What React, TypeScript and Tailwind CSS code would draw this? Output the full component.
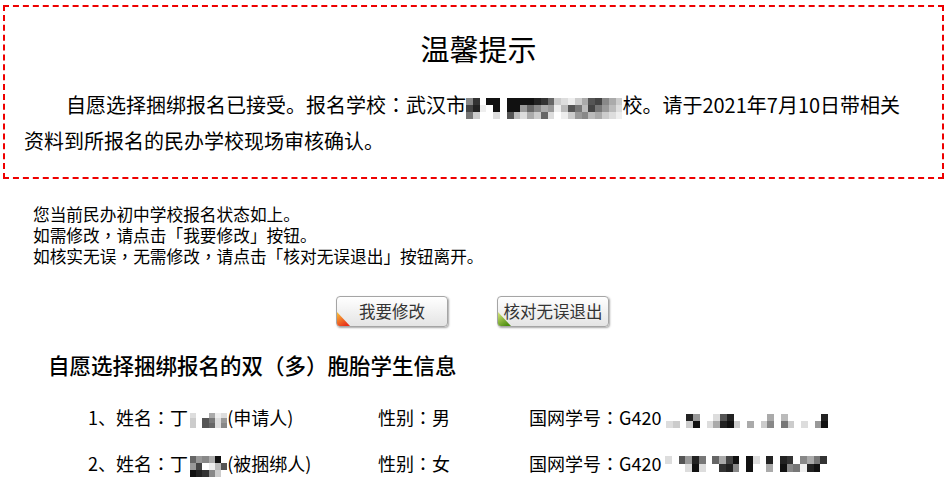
import React from "react";

type Cols = string[][];

function Mosaic({ cols, cw, ch, className = "" }: { cols: Cols; cw: number; ch: number; className?: string }) {
  const rows = cols[0].length;
  return (
    <svg
      width={cols.length * cw}
      height={rows * ch}
      className={"inline-block " + className}
      shapeRendering="crispEdges"
    >
      {cols.map((col, i) =>
        col.map((c, j) => <rect key={i + "-" + j} x={i * cw} y={j * ch} width={cw} height={ch} fill={c} />)
      )}
    </svg>
  );
}

function P({ children }: { children: React.ReactNode }) {
  return <span className="font-['Noto_Sans_CJK_TC','Noto_Sans_CJK_SC',sans-serif]">{children}</span>;
}

const topMosaic: Cols = [
  ["#888", "#444", "#777"],
  ["#333", "#222", "#ccc"],
  ["#fff", "#eee", "#fff"],
  ["#111", "#fff", "#fff"],
  ["#111", "#111", "#ddd"],
  ["#fff", "#fff", "#fff"],
  ["#111", "#111", "#555"],
  ["#111", "#111", "#bbb"],
  ["#111", "#999", "#ddd"],
  ["#111", "#666", "#aaa"],
  ["#222", "#888", "#ccc"],
  ["#333", "#aaa", "#666"],
  ["#666", "#999", "#ddd"],
  ["#ccc", "#eee", "#fff"],
  ["#ddd", "#bbb", "#eee"],
  ["#eee", "#555", "#ccc"],
  ["#ccc", "#777", "#999"],
  ["#aaa", "#bbb", "#888"],
  ["#555", "#444", "#bbb"],
  ["#444", "#777", "#aaa"],
  ["#888", "#999", "#ccc"],
  ["#aaa", "#bbb", "#ddd"],
  ["#ccc", "#ddd", "#eee"],
];

const name1: Cols = [
  ["#ddd", "#ccc", "#ccc"],
  ["#fff", "#fff", "#fff"],
  ["#fff", "#555", "#555"],
  ["#aaa", "#777", "#666"],
  ["#eee", "#ddd", "#ddd"],
  ["#ddd", "#999", "#888"],
];

const name2: Cols = [
  ["#666", "#999", "#111"],
  ["#999", "#444", "#222"],
  ["#888", "#fff", "#333"],
  ["#aaa", "#eee", "#888"],
  ["#111", "#bbb", "#ccc"],
  ["#fff", "#555", "#fff"],
];

const num1: Cols = [
  ["#fff", "#ddd"],
  ["#fff", "#ccc"],
  ["#fff", "#fff"],
  ["#222", "#ccc"],
  ["#999", "#111"],
  ["#fff", "#fff"],
  ["#fff", "#ddd"],
  ["#ddd", "#aaa"],
  ["#555", "#222"],
  ["#222", "#111"],
  ["#fff", "#ccc"],
  ["#fff", "#fff"],
  ["#fff", "#aaa"],
  ["#fff", "#fff"],
  ["#fff", "#ccc"],
  ["#aaa", "#888"],
  ["#fff", "#fff"],
  ["#bbb", "#777"],
  ["#fff", "#ccc"],
  ["#fff", "#fff"],
  ["#fff", "#ddd"],
  ["#fff", "#fff"],
  ["#fff", "#999"],
  ["#222", "#111"],
];

const num2: Cols = [
  ["#ddd", "#fff"],
  ["#fff", "#fff"],
  ["#555", "#fff"],
  ["#999", "#ddd"],
  ["#222", "#111"],
  ["#777", "#ddd"],
  ["#fff", "#fff"],
  ["#666", "#fff"],
  ["#aaa", "#333"],
  ["#444", "#222"],
  ["#111", "#888"],
  ["#fff", "#fff"],
  ["#111", "#111"],
  ["#ddd", "#fff"],
  ["#fff", "#fff"],
  ["#222", "#aaa"],
  ["#fff", "#fff"],
  ["#222", "#111"],
  ["#333", "#888"],
  ["#fff", "#777"],
  ["#888", "#eee"],
  ["#aaa", "#222"],
  ["#777", "#111"],
  ["#333", "#fff"],
];

function Btn({ label, from, to }: { label: string; from: string; to: string }) {
  const id = "g" + label.length + from.replace("#", "");
  return (
    <button className="relative h-[31px] w-[112px] rounded-[4px] border border-[#a5a5a5] bg-gradient-to-b from-white to-[#e4e4e4] text-[16.5px] leading-[29px] text-[#333] shadow-[1px_1px_2px_rgba(0,0,0,0.35)]">
      {label}
      <svg width="13" height="14" className="absolute bottom-0 left-0" viewBox="0 0 13 14">
        <defs>
          <linearGradient id={id} x1="0" y1="0" x2="0.6" y2="1">
            <stop offset="0" stopColor={from} />
            <stop offset="1" stopColor={to} />
          </linearGradient>
        </defs>
        <path d="M0 0 L0 11 Q0 14 3 14 L13 14 Z" fill={`url(#${id})`} />
      </svg>
    </button>
  );
}

export default function App() {
  return (
    <div className="min-h-[487px] w-[948px] bg-white font-['Noto_Sans_CJK_SC','Noto_Sans',sans-serif] text-black [text-spacing-trim:space-all]">
      <div className="px-[3px] pt-[5px]">
        <div className="h-[174px] w-[941px] border-2 border-dashed border-[#ee0000] pl-[19px] pr-[9px] pt-[21px]">
          <h1 className="text-center text-[29px] leading-[40px] font-normal">温馨提示</h1>
          <p className="mt-[19px] indent-[42px] text-[20px] leading-[36px]">
            自愿选择捆绑报名已接受。报名学校<P>：</P>武汉市
            <Mosaic cols={topMosaic} cw={6.8} ch={7} className="align-[-6px]" />
            校。请于2021年7月10日带相关
            <br />
            资料到所报名的民办学校现场审核确认。
          </p>
        </div>
      </div>

      <div className="mt-[25px] pl-[33px] text-[16.7px] leading-[21px]">
        <p>您当前民办初中学校报名状态如上。</p>
        <p>
          如需修改<P>，</P>请点击「我要修改」按钮。
        </p>
        <p>
          如核实无误<P>，</P>无需修改<P>，</P>请点击「核对无误退出」按钮离开。
        </p>
      </div>

      <div className="mt-[29px] flex justify-center gap-[49px] pr-[3px]">
        <Btn label="我要修改" from="#f9c33a" to="#e8321a" />
        <Btn label="核对无误退出" from="#d9e87a" to="#4f8f12" />
      </div>

      <h2 className="mt-[23px] pl-[48px] text-[21.5px] leading-[30px] font-medium">
        自愿选择捆绑报名的双（多）胞胎学生信息
      </h2>

      <div className="mt-[22px] flex flex-col gap-[16px] pl-[88px] text-[18px] leading-[30px]">
        <div className="flex">
          <span className="w-[290px]">
            1、姓名<P>：</P>丁
            <Mosaic cols={name1} cw={6.2} ch={5} className="ml-[2px] align-[-3px]" />
            (申请人)
          </span>
          <span className="w-[151px]">
            性别<P>：</P>男
          </span>
          <span>
            国网学号<P>：</P>G420
            <Mosaic cols={num1} cw={6.75} ch={7} className="ml-[5px] align-[-3px]" />
          </span>
        </div>
        <div className="flex">
          <span className="w-[290px]">
            2、姓名<P>：</P>丁
            <Mosaic cols={name2} cw={6.2} ch={7} className="ml-[2px] align-[-6px]" />
            (被捆绑人)
          </span>
          <span className="w-[151px]">
            性别<P>：</P>女
          </span>
          <span>
            国网学号<P>：</P>G420
            <Mosaic cols={num2} cw={6.75} ch={8} className="ml-[4px] align-[-1px]" />
          </span>
        </div>
      </div>
    </div>
  );
}
